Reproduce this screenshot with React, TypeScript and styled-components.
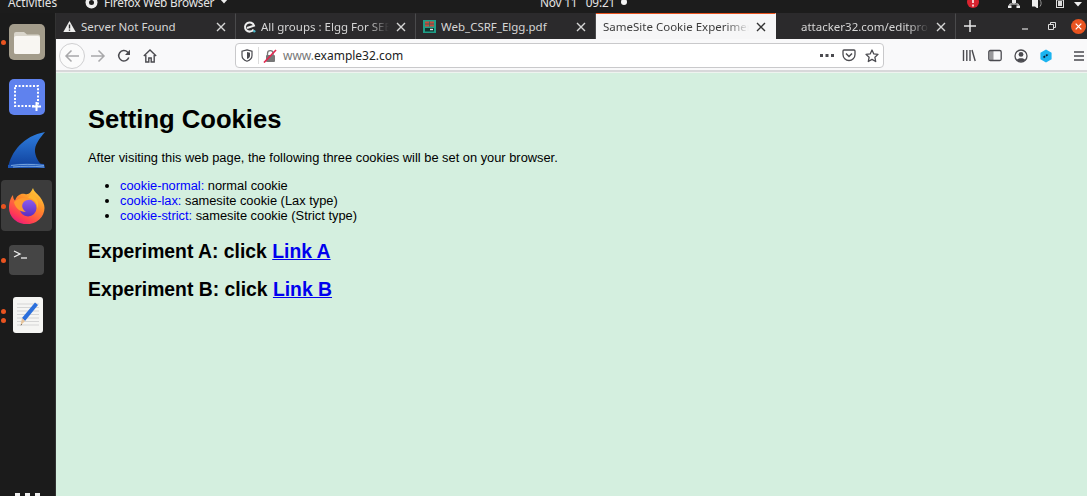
import styled, { createGlobalStyle } from "styled-components";

const uiFont = `"Noto Sans", "Open Sans", "DejaVu Sans", sans-serif`;

const GlobalStyle = createGlobalStyle`
html, body {
  margin: 0;
  padding: 0;
  background: #1c1c1c;
}
#root {
  width: 1087px;
  height: 496px;
  overflow: hidden;
}
`;

const Desktop = styled.div`
display: flex;
flex-flow: column nowrap;
width: 1087px;
height: 496px;
overflow: hidden;
font-family: ${uiFont};
`;

const TopBar = styled.div`
display: flex;
flex: 0 0 13px;
align-items: flex-end;
box-sizing: border-box;
height: 13px;
padding-bottom: 2px;
overflow: hidden;
background: #1c1c1c;
color: #e4e4e4;
font-size: 11.8px;
line-height: 18px;
`;

const TopLabel = styled.span<{ $width: number; $tight?: boolean }>`
flex: 0 0 ${(p) => p.$width}px;
display: flex;
align-items: center;
gap: 6px;
white-space: pre;
${(p) => p.$tight && "letter-spacing: -0.2px;"}

& svg {
  flex-shrink: 0;
}
`;

const ClockDot = styled.span`
width: 6px;
height: 6px;
border-radius: 50%;
background: #f4f4f4;
`;

const TopTray = styled.div`
display: flex;
align-items: flex-end;
margin-left: auto;
padding-right: 5px;
margin-bottom: 3px;
`;

const Lower = styled.div`
display: flex;
flex: 1 1 auto;
min-height: 0;
`;

const Dock = styled.div`
display: flex;
flex: 0 0 56px;
flex-flow: column nowrap;
align-items: center;
width: 56px;
background: #1b1b1b;
border-right: 1px solid #333;
box-sizing: border-box;
padding-top: 11px;
position: relative;
`;

const DockItem = styled.div<{ $height: number; $gap: number; $active?: boolean; $inset?: number }>`
display: flex;
align-items: center;
justify-content: center;
box-sizing: border-box;
width: 51px;
height: ${(p) => p.$height}px;
margin-bottom: ${(p) => p.$gap}px;
margin-right: 3px;
padding-left: ${(p) => p.$inset ?? 1}px;
border-radius: 4px;
background: ${(p) => (p.$active ? "#3c3c3c" : "transparent")};
position: relative;
`;

const RunDot = styled.span<{ $offset?: number }>`
position: absolute;
left: 0;
top: calc(50% + ${(p) => p.$offset ?? 0}px - 2px);
width: 5px;
height: 5px;
border-radius: 50%;
background: #e95420;
`;

const DockMore = styled.div`
display: flex;
gap: 5px;
position: absolute;
left: 15px;
bottom: -2px;

& span {
  width: 5px;
  height: 5px;
  background: #f0f0f0;
}
`;

const Browser = styled.div`
display: flex;
flex: 1 1 auto;
flex-flow: column nowrap;
min-width: 0;
`;

const TabStrip = styled.div`
display: flex;
flex: 0 0 26px;
align-items: stretch;
height: 26px;
overflow: hidden;
background: #2b2a2c;
color: #d8d8d8;
font-size: 11.5px;
`;

const Tab = styled.div<{ $active?: boolean; $indent: number }>`
display: flex;
flex: 0 0 180px;
min-width: 0;
align-items: center;
box-sizing: border-box;
padding: 0 7px 0 ${(p) => p.$indent}px;
gap: 5px;
background: ${(p) => (p.$active ? "#f6f6f7" : "transparent")};
color: ${(p) => (p.$active ? "#3c3c3c" : "#d6d6d6")};
border-top: 1px solid ${(p) => (p.$active ? "#e95420" : "transparent")};
border-right: 1px solid ${(p) => (p.$active ? "transparent" : "#4a4a4c")};

& svg {
  flex-shrink: 0;
}
`;

const TabTitle = styled.span<{ $fade?: boolean }>`
flex: 1 1 auto;
min-width: 0;
white-space: nowrap;
overflow: hidden;
${(p) => p.$fade && "mask-image: linear-gradient(to right, #000 84%, transparent 100%);"}
`;

const TabClose = styled.span`
display: flex;
flex: 0 0 14px;
align-items: center;
justify-content: center;
`;

const Spacer = styled.span<{ $width: number }>`
flex: 0 0 ${(p) => p.$width}px;
`;

const StripButton = styled.span`
display: flex;
flex: 0 0 27px;
align-items: center;
justify-content: center;
`;

const Toolbar = styled.div`
display: flex;
flex: 0 0 33px;
align-items: center;
box-sizing: border-box;
height: 33px;
background: #f9f9fa;
border-bottom: 2px solid #d8d8da;
padding: 2px 0 0 3px;
`;

const ToolButton = styled.span<{ $width: number; $round?: boolean }>`
display: flex;
flex: 0 0 ${(p) => p.$width}px;
align-items: center;
justify-content: center;
height: 26px;
box-sizing: border-box;
${(p) => p.$round && "border: 1px solid #cfcfd1; border-radius: 50%; background: #fbfbfb;"}
`;

const UrlBar = styled.div`
display: flex;
flex: 0 0 649px;
align-items: center;
box-sizing: border-box;
height: 25px;
margin-left: 73px;
background: #fff;
border: 1px solid #c9c9cb;
border-radius: 4px;
font-size: 12px;
color: #777;
`;

const UrlDivider = styled.span`
width: 1px;
height: 17px;
background: #dcdcdc;
margin: 0 4px 0 1px;
`;

const UrlText = styled.span`
flex: 1 1 auto;
margin-left: 6px;

& b {
  font-weight: 400;
  color: #222;
}
`;

const ToolbarDivider = styled.span`
width: 1px;
height: 25px;
background: #dcdcdc;
margin: 0 6px 0 4px;
`;

const Page = styled.main`
flex: 1 1 auto;
background: #d4efdf;
color: #000;
font-family: "Liberation Sans", Arial, sans-serif;
font-size: 12.85px;
line-height: 15px;
padding: 30px 32px 0;
border-top: 1px solid #eef3ef;
overflow: hidden;
`;

const Title = styled.h1`
margin: 0 0 15px;
font-size: 25.6px;
line-height: 32px;
font-weight: 700;
`;

const Intro = styled.p`
margin: 0 0 12px;
line-height: 16px;
`;

const CookieList = styled.ul`
margin: 0 0 17px;
padding-left: 32px;
`;

const CookieName = styled.span`
color: #0000ff;
`;

const Experiment = styled.h2`
margin: 0 0 15px;
font-size: 19.35px;
line-height: 23px;
font-weight: 700;

& a {
  color: #0000ee;
  text-decoration: underline;
}
`;

function CloseIcon({ color = "#d6d6d6" }: { color?: string }) {
  return (
    <svg width="10" height="10" viewBox="0 0 10 10">
      <path d="M1 1l8 8M9 1l-8 8" stroke={color} strokeWidth="1.4" />
    </svg>
  );
}

function WarningIcon() {
  return (
    <svg width="13" height="13" viewBox="0 0 13 13">
      <path d="M6.5 1L12.7 12H.3z" fill="#eee" />
      <path d="M6.5 4.5v4M6.5 9.5v1.3" stroke="#2b2a2c" strokeWidth="1.4" />
    </svg>
  );
}

function ElggIcon() {
  return (
    <svg width="13" height="13" viewBox="0 0 13 13">
      <path d="M10.5 9.5A4.6 4.6 0 1 1 11 5.6L4 8" fill="none" stroke="#eee" strokeWidth="2" />
      <circle cx="11.3" cy="11.3" r="1.2" fill="#4bb8c9" />
    </svg>
  );
}

function PdfIcon() {
  return (
    <svg width="13" height="13" viewBox="0 0 13 13">
      <rect width="13" height="13" fill="#1f9d87" />
      <rect x="2" y="1.5" width="9" height="5" fill="#c94a3d" />
      <path d="M2 4h9M6.5 1.5v5" stroke="#1f6b5f" strokeWidth="0.8" />
      <rect x="2" y="8" width="9" height="3.5" fill="#12342e" />
      <rect x="7" y="8.8" width="3" height="1.4" fill="#e8e8e8" />
    </svg>
  );
}

function FilesIcon() {
  return (
    <svg width="36" height="36" viewBox="0 0 36 36">
      <rect width="36" height="36" rx="5" fill="#a39c8b" />
      <path d="M5 10a2 2 0 0 1 2-2h8l3 2.500h11a2 2 0 0 1 2 2V28a2 2 0 0 1-2 2H7a2 2 0 0 1-2-2z" fill="#d9d5cb" />
      <path d="M5 14a2 2 0 0 1 2-2h22a2 2 0 0 1 2 2v14a2 2 0 0 1-2 2H7a2 2 0 0 1-2-2z" fill="#f8f6f2" />
    </svg>
  );
}

function ScreenshotIcon() {
  return (
    <svg width="36" height="36" viewBox="0 0 36 36">
      <rect width="36" height="36" rx="5" fill="#5f82ee" />
      <rect x="6" y="7" width="23" height="20" fill="none" stroke="#fff" strokeWidth="2" strokeDasharray="2 1.6" />
      <path d="M23 27.500h9M27.500 23v9" stroke="#fff" strokeWidth="2" />
    </svg>
  );
}

function WiresharkIcon() {
  return (
    <svg width="38" height="38" viewBox="0 0 38 38">
      <defs>
        <linearGradient id="fin" x1="0" y1="0" x2="0" y2="1">
          <stop offset="0" stopColor="#2f7fe0" />
          <stop offset="1" stopColor="#0f3f9a" />
        </linearGradient>
      </defs>
      <path d="M0 36C3 20 15 4 37 0 C32 6 26 13 27 20 C28 27 32 32 37 36z" fill="url(#fin)" />
      <path d="M0 33c11-2 25-2 36-1l1 4H0z" fill="#1c55b5" />
      <path d="M3 33.500c10-1.500 22-1.500 33 0M5 35c10-1 20-1 31 0" stroke="#9cc4ee" strokeWidth="0.7" fill="none" />
    </svg>
  );
}

function FirefoxIcon() {
  return (
    <svg width="37" height="37" viewBox="0 0 37 37">
      <defs>
        <linearGradient id="ffBody" x1="0.8" y1="0" x2="0.2" y2="1">
          <stop offset="0" stopColor="#ffd43a" />
          <stop offset="0.4" stopColor="#ff8a2a" />
          <stop offset="0.8" stopColor="#ff3a55" />
          <stop offset="1" stopColor="#e31587" />
        </linearGradient>
        <linearGradient id="ffGlobe" x1="0.5" y1="0" x2="0.5" y2="1">
          <stop offset="0" stopColor="#8d5cf0" />
          <stop offset="1" stopColor="#5a2dc0" />
        </linearGradient>
      </defs>
      <path d="M25 1c1 4 4 5 7 9 3 4 4.500 8 4.500 11A17.500 16 0 0 1 1 21C1 15 3 10 5 8c0 3 1 5 2 5.500C9 8 13 6 17 7c4 1 6-2 8-6z" fill="url(#ffBody)" />
      <circle cx="20" cy="21" r="8.500" fill="url(#ffGlobe)" />
      <path d="M6 15c5-5 12-5 16-2-4-.5-6 1-7 3-2 3 0 7 3 9-6 0-11-4-12-10z" fill="#ff9a2e" />
      <path d="M20 11c6 0 10 5 9 11 3-6 0-13-6-15z" fill="#ffb52e" />
    </svg>
  );
}

function TerminalIcon() {
  return (
    <svg width="35" height="30" viewBox="0 0 35 30">
      <rect width="35" height="30" rx="4" fill="#454545" />
      <path d="M5 6l6 3-6 3" fill="none" stroke="#eee" strokeWidth="1.300" />
      <path d="M12 13h6" stroke="#eee" strokeWidth="1.300" />
    </svg>
  );
}

function EditorIcon() {
  return (
    <svg width="30" height="36" viewBox="0 0 30 36">
      <rect width="30" height="36" rx="3" fill="#f5f5f3" />
      <path d="M4 7h22M4 10.500h22M4 14h22M4 17.500h22M4 21h22M4 24.500h22M4 28h22" stroke="#d5d5d5" strokeWidth="1" />
      <path d="M25 8l-3-2.500L9 21l3 3z" fill="#2b6fdc" />
      <path d="M9 21l3 3-4.500 4.500z" fill="#e7c49a" />
      <path d="M8.500 27l-1 1.500 1.500-.8z" fill="#333" />
    </svg>
  );
}

const stroke = "#4a4a4f";

function BackIcon() {
  return (
    <svg width="16" height="14" viewBox="0 0 16 14">
      <path d="M15 7H2M7.500 1.500L2 7l5.500 5.500" fill="none" stroke="#a8a8aa" strokeWidth="1.500" />
    </svg>
  );
}

function ForwardIcon() {
  return (
    <svg width="16" height="14" viewBox="0 0 16 14">
      <path d="M1 7h13M8.500 1.500L14 7l-5.500 5.500" fill="none" stroke="#a8a8aa" strokeWidth="1.500" />
    </svg>
  );
}

function ReloadIcon() {
  return (
    <svg width="14" height="14" viewBox="0 0 14 14">
      <path d="M11.800 8.500A5.200 5.200 0 1 1 10.500 3L12.500 5" fill="none" stroke={stroke} strokeWidth="1.500" />
      <path d="M13 .8V6H8z" fill={stroke} />
    </svg>
  );
}

function HomeIcon() {
  return (
    <svg width="14" height="14" viewBox="0 0 14 14">
      <path d="M.8 7L7 1l6.200 6M2.800 6v7h3V9h2.400v4h3V6" fill="none" stroke={stroke} strokeWidth="1.400" />
    </svg>
  );
}

function ShieldIcon() {
  return (
    <svg width="12" height="13" viewBox="0 0 12 13">
      <path d="M6 .8l5 1.400v4.300c0 3-2.200 4.800-5 5.700-2.800-.9-5-2.700-5-5.700V2.200z" fill="none" stroke={stroke} strokeWidth="1.200" />
      <path d="M6 3l3 .8v2.700c0 1.700-1.200 2.900-3 3.500z" fill={stroke} />
    </svg>
  );
}

function InsecureLockIcon() {
  return (
    <svg width="14" height="14" viewBox="0 0 14 14">
      <path d="M4.500 6V4.500a2.800 2.800 0 0 1 5.600 0V6" fill="none" stroke="#777" strokeWidth="1.300" />
      <rect x="3" y="6" width="9" height="7" rx="1" fill="#777" />
      <path d="M1 13.500L13 1" stroke="#e22850" strokeWidth="1.700" />
    </svg>
  );
}

function PocketIcon() {
  return (
    <svg width="14" height="13" viewBox="0 0 14 13">
      <path d="M2 1h10a1 1 0 0 1 1 1v3.500a6 6 0 0 1-12 0V2a1 1 0 0 1 1-1z" fill="none" stroke={stroke} strokeWidth="1.300" />
      <path d="M4 4.500L7 7.500l3-3" fill="none" stroke={stroke} strokeWidth="1.500" />
    </svg>
  );
}

function StarIcon() {
  return (
    <svg width="14" height="14" viewBox="0 0 14 14">
      <path d="M7 1l1.800 3.900 4.200.5-3.100 2.900.8 4.200L7 10.400l-3.700 2.100.8-4.200L1 5.400l4.200-.5z" fill="none" stroke={stroke} strokeWidth="1.300" strokeLinejoin="round" />
    </svg>
  );
}

function LibraryIcon() {
  return (
    <svg width="14" height="13" viewBox="0 0 14 13">
      <path d="M1.500 1v11M4.800 1v11M8 1v11M10 1l3.200 11" fill="none" stroke={stroke} strokeWidth="1.400" />
    </svg>
  );
}

function SidebarIcon() {
  return (
    <svg width="14" height="13" viewBox="0 0 14 13">
      <rect x=".8" y="1.500" width="12.400" height="10" rx="1.500" fill="none" stroke={stroke} strokeWidth="1.300" />
      <rect x="1.500" y="2" width="4" height="9" fill={stroke} opacity="0.55" />
    </svg>
  );
}

function AccountIcon() {
  return (
    <svg width="14" height="14" viewBox="0 0 14 14">
      <circle cx="7" cy="7" r="6" fill="none" stroke={stroke} strokeWidth="1.300" />
      <circle cx="7" cy="5.400" r="2.400" fill={stroke} />
      <path d="M2.800 11c1-2.400 7.400-2.400 8.400 0a6 6 0 0 1-8.400 0z" fill={stroke} />
    </svg>
  );
}

function ExtensionIcon() {
  return (
    <svg width="14" height="14" viewBox="0 0 14 14">
      <path d="M7 .5l5.600 3.200v6.600L7 13.500 1.400 10.300V3.700z" fill="#1cb4f0" />
      <path d="M4.500 8.500L9.500 5" stroke="#10233a" strokeWidth="1.800" strokeDasharray="2 1" />
    </svg>
  );
}

function MenuIcon() {
  return (
    <svg width="10" height="12" viewBox="0 0 10 12">
      <path d="M0 2h10M0 6h10M0 10h10" stroke={stroke} strokeWidth="1.500" />
    </svg>
  );
}

function AlertIcon() {
  return (
    <svg width="12" height="12" viewBox="0 0 12 12">
      <circle cx="6" cy="6" r="6" fill="#d8232f" />
      <path d="M6 1v6M6 8.500v2" stroke="#fff" strokeWidth="1.500" />
    </svg>
  );
}

function NetworkIcon() {
  return (
    <svg width="12" height="8" viewBox="0 0 12 8">
      <path d="M4 0h4v3H4zM0 5.500h3.500V8H0zM8.500 5.500H12V8H8.500z" fill="#eee" />
      <path d="M1.800 5.500V4h8.400v1.500M6 3v1" stroke="#eee" fill="none" />
    </svg>
  );
}

function SpeakerIcon() {
  return (
    <svg width="11" height="8" viewBox="0 0 11 8">
      <path d="M0 0h3l3-2v11L3 6.500H0z" fill="#eee" />
      <path d="M8 0c1.500 2 1.500 4.500 0 6.500" stroke="#999" fill="none" />
    </svg>
  );
}

function BatteryIcon() {
  return (
    <svg width="8" height="8" viewBox="0 0 8 8">
      <rect x=".5" width="7" height="7.500" fill="none" stroke="#ddd" />
      <rect x="2" y="1" width="4" height="5" fill="#ddd" />
    </svg>
  );
}

function CaretIcon() {
  return (
    <svg width="8" height="6" viewBox="0 0 8 6">
      <path d="M0 0h8L4 4.500z" fill="#eee" />
    </svg>
  );
}

export default function App() {
  return (
    <Desktop>
      <GlobalStyle />
      <TopBar>
        <Spacer $width={8} />
        <TopLabel $width={77}>Activities</TopLabel>
        <TopLabel $width={455} $tight>
          <svg width="13" height="13" viewBox="0 0 13 13">
            <circle cx="6.500" cy="6.500" r="6" fill="#eee" />
            <circle cx="6.500" cy="6.500" r="2.500" fill="#1c1c1c" />
          </svg>
          Firefox Web Browser
          <CaretIcon />
        </TopLabel>
        <TopLabel $width={100} $tight>
          {"Nov 11\u00a0\u00a0\u00a009:21"}
          <ClockDot />
        </TopLabel>
        <TopTray>
          <AlertIcon />
          <Spacer $width={29} />
          <NetworkIcon />
          <Spacer $width={12} />
          <SpeakerIcon />
          <Spacer $width={13} />
          <BatteryIcon />
          <Spacer $width={10} />
          <CaretIcon />
        </TopTray>
      </TopBar>
      <Lower>
        <Dock>
          <DockItem $height={36} $gap={19}><RunDot /><FilesIcon /></DockItem>
          <DockItem $height={36} $gap={17}><ScreenshotIcon /></DockItem>
          <DockItem $height={38} $gap={10}><WiresharkIcon /></DockItem>
          <DockItem $height={51} $gap={14} $active><RunDot /><FirefoxIcon /></DockItem>
          <DockItem $height={30} $gap={22}><RunDot /><TerminalIcon /></DockItem>
          <DockItem $height={36} $gap={0} $inset={4}><RunDot $offset={-4} /><RunDot $offset={5} /><EditorIcon /></DockItem>
          <DockMore><span /><span /><span /></DockMore>
        </Dock>
        <Browser>
          <TabStrip>
            <Tab $indent={7}>
              <WarningIcon />
              <TabTitle>Server Not Found</TabTitle>
              <TabClose><CloseIcon /></TabClose>
            </Tab>
            <Tab $indent={7}>
              <ElggIcon />
              <TabTitle $fade>All groups : Elgg For SEED Labs</TabTitle>
              <TabClose><CloseIcon /></TabClose>
            </Tab>
            <Tab $indent={7}>
              <PdfIcon />
              <TabTitle>Web_CSRF_Elgg.pdf</TabTitle>
              <TabClose><CloseIcon /></TabClose>
            </Tab>
            <Tab $active $indent={7}>
              <TabTitle $fade>SameSite Cookie Experiment</TabTitle>
              <TabClose><CloseIcon color="#333" /></TabClose>
            </Tab>
            <Tab $indent={25}>
              <TabTitle $fade>attacker32.com/editprofile</TabTitle>
              <TabClose><CloseIcon /></TabClose>
            </Tab>
            <StripButton>
              <svg width="12" height="12" viewBox="0 0 12 12">
                <path d="M6 0v12M0 6h12" stroke="#e8e8e8" strokeWidth="1.500" />
              </svg>
            </StripButton>
            <Spacer $width={28} />
            <StripButton>
              <svg width="8" height="8" viewBox="0 0 8 8"><path d="M1 7h6" stroke="#ddd" strokeWidth="1.200" /></svg>
            </StripButton>
            <StripButton>
              <svg width="8" height="8" viewBox="0 0 8 8">
                <path d="M.5 2.500h5v5h-5zM2.500 2.500v-2h5v5h-2" fill="none" stroke="#ddd" />
              </svg>
            </StripButton>
            <StripButton>
              <svg width="15" height="15" viewBox="0 0 16 16">
                <circle cx="8" cy="8" r="8" fill="#e95420" />
                <path d="M5 5l6 6M11 5l-6 6" stroke="#fff" strokeWidth="1.300" />
              </svg>
            </StripButton>
          </TabStrip>
          <Toolbar>
            <ToolButton $width={26} $round><BackIcon /></ToolButton>
            <ToolButton $width={26}><ForwardIcon /></ToolButton>
            <ToolButton $width={26}><ReloadIcon /></ToolButton>
            <ToolButton $width={25}><HomeIcon /></ToolButton>
            <UrlBar>
              <ToolButton $width={21}><ShieldIcon /></ToolButton>
              <UrlDivider />
              <ToolButton $width={14}><InsecureLockIcon /></ToolButton>
              <UrlText>www.<b>example32.com</b></UrlText>
              <ToolButton $width={20}>
                <svg width="14" height="4" viewBox="0 0 14 4">
                  <path d="M0 0h3v3H0zM5.500 0h3v3h-3zM11 0h3v3h-3z" fill={stroke} />
                </svg>
              </ToolButton>
              <ToolButton $width={24}><PocketIcon /></ToolButton>
              <ToolButton $width={22}><StarIcon /></ToolButton>
            </UrlBar>
            <Spacer $width={72} />
            <ToolButton $width={26}><LibraryIcon /></ToolButton>
            <ToolButton $width={26}><SidebarIcon /></ToolButton>
            <ToolButton $width={25}><AccountIcon /></ToolButton>
            <ToolButton $width={25}><ExtensionIcon /></ToolButton>
            <ToolbarDivider />
            <ToolButton $width={22}><MenuIcon /></ToolButton>
          </Toolbar>
          <Page>
            <Title>Setting Cookies</Title>
            <Intro>After visiting this web page, the following three cookies will be set on your browser.</Intro>
            <CookieList>
              <li><CookieName>cookie-normal:</CookieName> normal cookie</li>
              <li><CookieName>cookie-lax:</CookieName> samesite cookie (Lax type)</li>
              <li><CookieName>cookie-strict:</CookieName> samesite cookie (Strict type)</li>
            </CookieList>
            <Experiment>Experiment A: click <a href="#a">Link A</a></Experiment>
            <Experiment>Experiment B: click <a href="#b">Link B</a></Experiment>
          </Page>
        </Browser>
      </Lower>
    </Desktop>
  );
}
